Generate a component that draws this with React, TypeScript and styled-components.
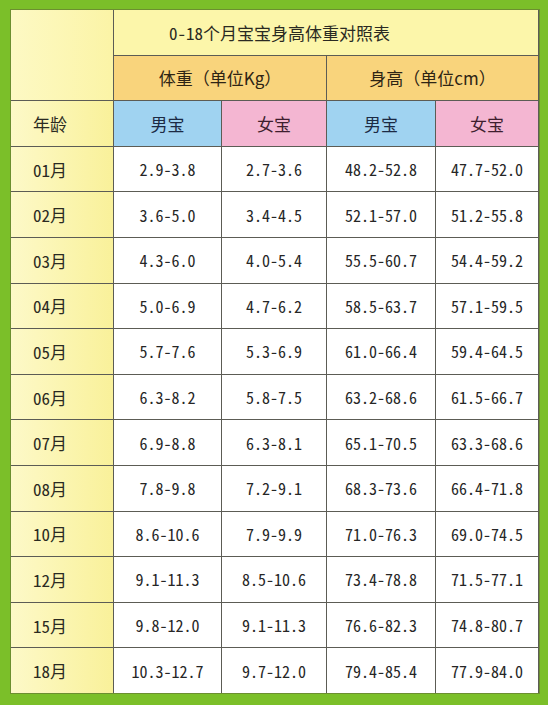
import React from "react";
import styled, { createGlobalStyle } from "styled-components";

const GlobalStyle = createGlobalStyle`
  html, body {
    margin: 0;
    padding: 0;
    background: #7bbf29;
  }
  body {
    font-family: "Noto Sans CJK SC", "Noto Sans", sans-serif;
  }
`;

const Page = styled.div`
  width: 548px;
  height: 705px;
  box-sizing: border-box;
  padding: 10px 9px 12px 11px;
  background: #7bbf29;
`;

const Grid = styled.div`
  display: grid;
  grid-template-columns: 102px 107px 104px 108px 102px;
  grid-template-rows: repeat(15, 1fr);
  gap: 1px;
  height: 100%;
  background: #5c5c55;
  box-shadow: 0 0 0 1px #6c8f30;
`;

type Tone = "yellow" | "orange" | "blue" | "pink" | "white";

const backgrounds: Record<Tone, string> = {
  yellow: "#fcf6aa",
  orange: "#f9d47c",
  blue: "#a0d3f1",
  pink: "#f4b6d2",
  white: "#ffffff",
};

const inks: Record<Tone, string> = {
  yellow: "#2a2a22",
  orange: "#2e2414",
  blue: "#1c2a44",
  pink: "#3e1e2e",
  white: "#262626",
};

// hwid gives the half-width, monospaced digits of the original table
const Cell = styled.div<{ $tone: Tone }>`
  display: flex;
  align-items: center;
  justify-content: center;
  background: ${(p) => backgrounds[p.$tone]};
  color: ${(p) => inks[p.$tone]};
  font-size: 17px;
  white-space: nowrap;
  font-feature-settings: "hwid";
`;

const Corner = styled(Cell)`
  grid-row: span 2;
  background: linear-gradient(to right, #fdf9c4, #fbf4a6);
`;

const Title = styled(Cell)`
  grid-column: span 4;
  justify-content: flex-start;
  padding-left: 55px;
`;

const Group = styled(Cell)`
  grid-column: span 2;
  font-feature-settings: normal;
`;

const AgeCell = styled(Cell)`
  justify-content: flex-start;
  padding-left: 22px;
  background: linear-gradient(to right, #fdf9c8, #f9f19a);
`;

const Value = styled(Cell)`
  font-size: 16px;
`;

const rows: [string, string, string, string, string][] = [
  ["01月", "2.9-3.8", "2.7-3.6", "48.2-52.8", "47.7-52.0"],
  ["02月", "3.6-5.0", "3.4-4.5", "52.1-57.0", "51.2-55.8"],
  ["03月", "4.3-6.0", "4.0-5.4", "55.5-60.7", "54.4-59.2"],
  ["04月", "5.0-6.9", "4.7-6.2", "58.5-63.7", "57.1-59.5"],
  ["05月", "5.7-7.6", "5.3-6.9", "61.0-66.4", "59.4-64.5"],
  ["06月", "6.3-8.2", "5.8-7.5", "63.2-68.6", "61.5-66.7"],
  ["07月", "6.9-8.8", "6.3-8.1", "65.1-70.5", "63.3-68.6"],
  ["08月", "7.8-9.8", "7.2-9.1", "68.3-73.6", "66.4-71.8"],
  ["10月", "8.6-10.6", "7.9-9.9", "71.0-76.3", "69.0-74.5"],
  ["12月", "9.1-11.3", "8.5-10.6", "73.4-78.8", "71.5-77.1"],
  ["15月", "9.8-12.0", "9.1-11.3", "76.6-82.3", "74.8-80.7"],
  ["18月", "10.3-12.7", "9.7-12.0", "79.4-85.4", "77.9-84.0"],
];

export default function App() {
  return (
    <>
      <GlobalStyle />
      <Page>
        <Grid>
          <Corner $tone="yellow" />
          <Title $tone="yellow">0-18个月宝宝身高体重对照表</Title>
          <Group $tone="orange">体重（单位Kg）</Group>
          <Group $tone="orange">身高（单位cm）</Group>

          <AgeCell $tone="yellow">年龄</AgeCell>
          <Cell $tone="blue">男宝</Cell>
          <Cell $tone="pink">女宝</Cell>
          <Cell $tone="blue">男宝</Cell>
          <Cell $tone="pink">女宝</Cell>

          {rows.map(([age, ...values]) => (
            <React.Fragment key={age}>
              <AgeCell $tone="yellow">{age}</AgeCell>
              {values.map((v, i) => (
                <Value key={i} $tone="white">
                  {v}
                </Value>
              ))}
            </React.Fragment>
          ))}
        </Grid>
      </Page>
    </>
  );
}
